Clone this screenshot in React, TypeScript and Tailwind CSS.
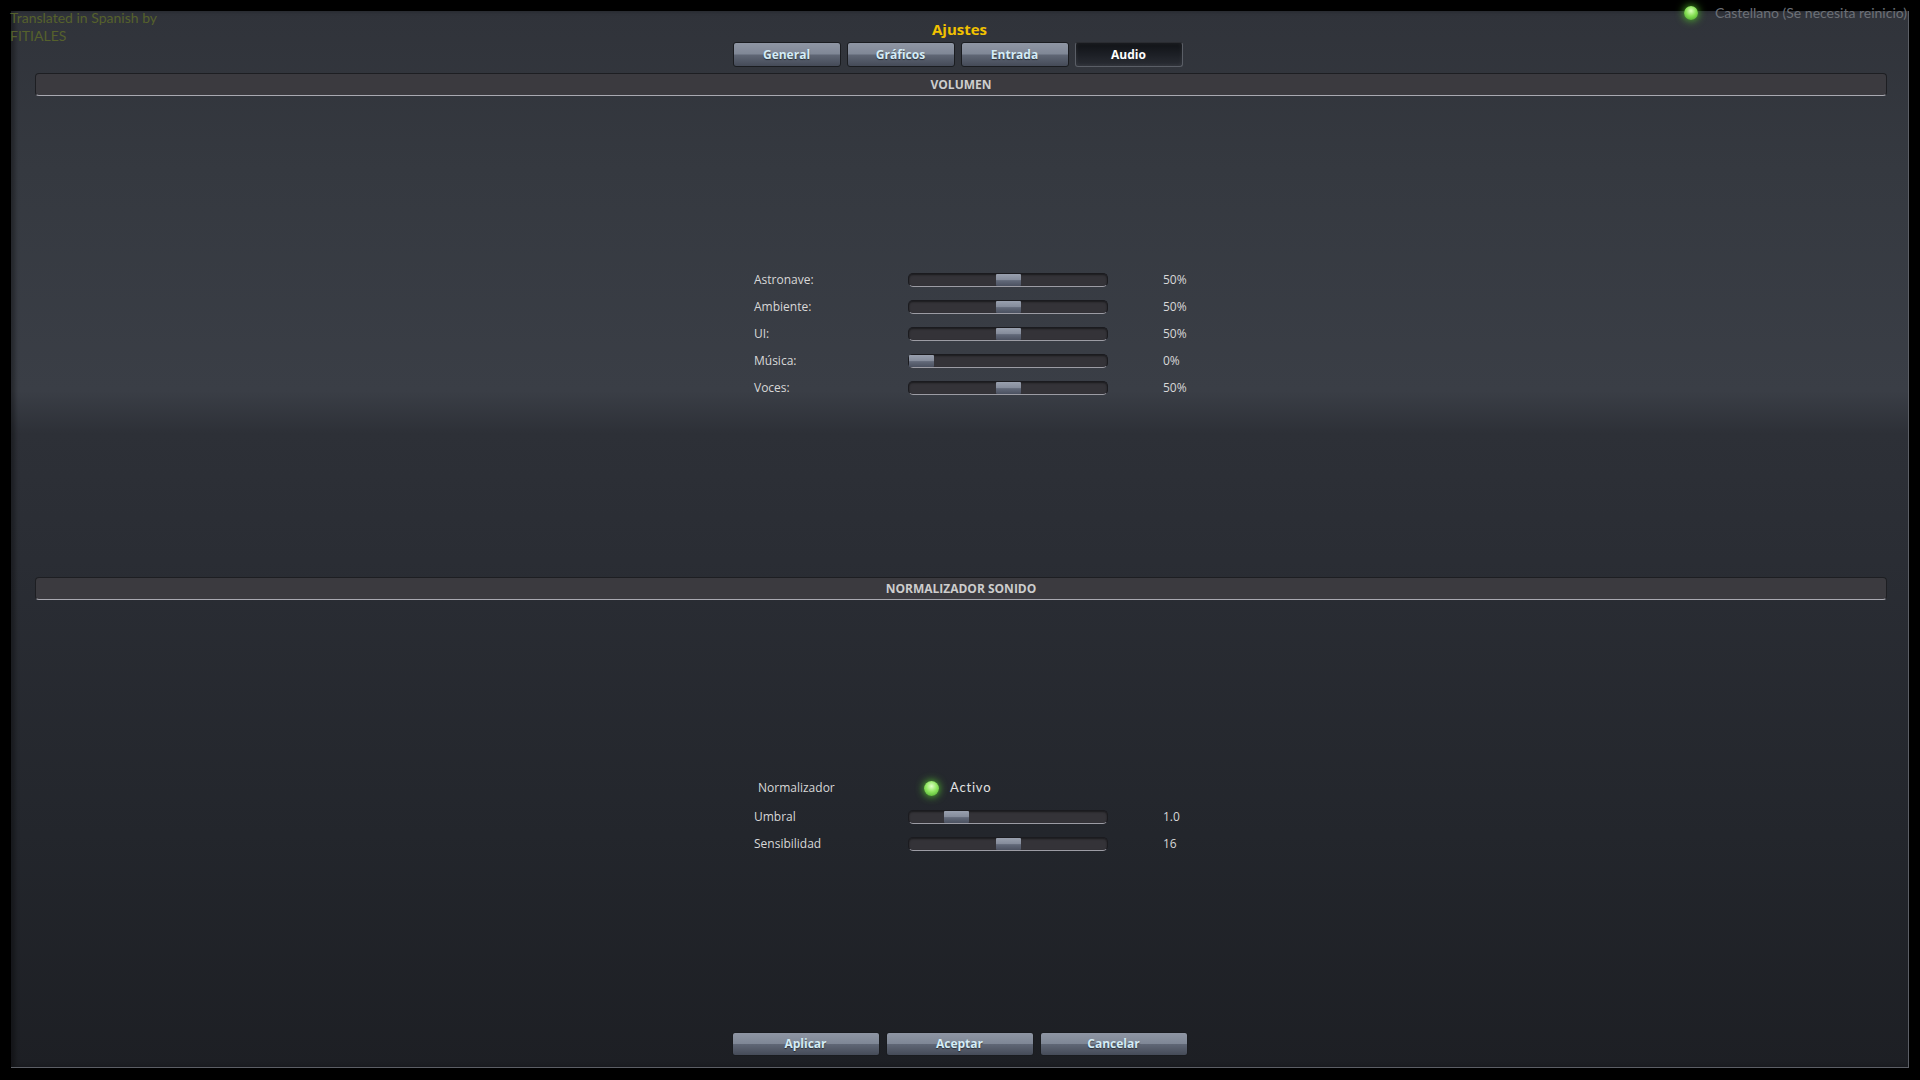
import React from 'react';

type SliderRow = { label: string; pct: number; value: string };

const volumeRows: SliderRow[] = [
  { label: 'Astronave:', pct: 0.5, value: '50%' },
  { label: 'Ambiente:', pct: 0.5, value: '50%' },
  { label: 'UI:', pct: 0.5, value: '50%' },
  { label: 'Música:', pct: 0, value: '0%' },
  { label: 'Voces:', pct: 0.5, value: '50%' },
];

const normRows: SliderRow[] = [
  { label: 'Umbral', pct: 0.2, value: '1.0' },
  { label: 'Sensibilidad', pct: 0.5, value: '16' },
];

const tabs = ['General', 'Gráficos', 'Entrada', 'Audio'];

function Slider({ pct }: { pct: number }) {
  return (
    <div className="relative h-[14px] w-[200px] rounded-[5px] border border-[#1b1b1f] border-b-[#9c9ca4] bg-[#343338] shadow-[inset_0_1px_2px_rgba(0,0,0,0.5)]">
      <div
        className="absolute top-0 h-full w-[25px] rounded-[1px] bg-[linear-gradient(to_bottom,#99a0ae_0%,#858c9b_48%,#626979_55%,#4b5160_100%)]"
        style={{ left: `${pct * 173}px` }}
      />
    </div>
  );
}

function Row({ row }: { row: SliderRow }) {
  return (
    <div className="flex h-[27px] items-center pl-[743px] font-['Open_Sans',sans-serif]">
      <div className="w-[154px] text-[12px] text-[#d8d8d8]">{row.label}</div>
      <Slider pct={row.pct} />
      <div className="ml-[55px] text-[12px] text-[#d8d8d8]">{row.value}</div>
    </div>
  );
}

function SectionHeader({ title }: { title: string }) {
  return (
    <div className="ml-[24px] mr-[21px] flex h-[23px] items-center justify-center rounded-[4px] border border-[#1d1e22] border-b-[#a9a9b1] bg-[#3b3a3f] font-['Open_Sans',sans-serif] text-[12px] font-bold text-[#cdcdcd]">
      {title}
    </div>
  );
}

function GameButton({ label, active = false, wide = false }: { label: string; active?: boolean; wide?: boolean }) {
  const size = wide ? 'w-[148px] h-[24px]' : 'w-[108px] h-[25px]';
  if (active) {
    return (
      <div
        className={`${size} flex items-center justify-center rounded-[3px] border border-[#5a5e66] border-t-[#2a2c31] bg-[linear-gradient(to_bottom,#101216_0%,#1c1f25_50%,#2a2d34_100%)] font-['Open_Sans',sans-serif] text-[12px] font-bold text-white shadow-[inset_0_0_4px_rgba(255,255,255,0.08)]`}
      >
        {label}
      </div>
    );
  }
  return (
    <div
      className={`${size} flex items-center justify-center rounded-[3px] border border-[#1a1c20] bg-[linear-gradient(to_bottom,#8f96a4_0%,#7f8796_48%,#5f6675_52%,#454b58_100%)] font-['Open_Sans',sans-serif] text-[12px] font-bold text-[#d4ecf6] [text-shadow:0_1px_1px_rgba(0,0,0,0.5)]`}
    >
      {label}
    </div>
  );
}

export default function App() {
  return (
    <div className="h-screen w-screen bg-black pt-[11px] pr-[11px] pb-[12px] pl-[11px] font-['Lato','Open_Sans',sans-serif]">
      <div className="relative flex h-full flex-col border-r border-b border-[#5c5f66] bg-[linear-gradient(to_bottom,#30333a_0%,#353940_15%,#3a3e46_36%,#2d3037_40%,#2a2d34_52%,#23262c_78%,#1d1f24_100%)] shadow-[inset_4px_0_4px_rgba(0,0,0,0.35)]">
        {/* credits */}
        <div className="absolute left-[-1px] top-[-2px] text-[14px] leading-[18px] text-[#56612c]">
          <div>Translated in Spanish by</div>
          <div>FITIALES</div>
        </div>

        {/* language */}
        <div className="absolute right-[1px] top-[-9px] flex items-center">
          <div className="h-[14px] w-[14px] rounded-full bg-[radial-gradient(circle_at_50%_35%,#d8ffb8_0%,#86e055_45%,#3f9a22_100%)] shadow-[0_0_8px_#56d12a]" />
          <div className="ml-[17px] text-[14px] text-[#6c7077]">Castellano (Se necesita reinicio)</div>
        </div>

        <div className="pt-[8px] text-center font-['Open_Sans',sans-serif] text-[15px] font-bold leading-[20px] text-[#f2c200]">Ajustes</div>

        <div className="mt-[3px] flex justify-center gap-[6px] pr-[4px]">
          {tabs.map((t) => (
            <GameButton key={t} label={t} active={t === 'Audio'} />
          ))}
        </div>

        <div className="mt-[6px]">
          <SectionHeader title="VOLUMEN" />
        </div>

        <div className="mt-[170px]">
          {volumeRows.map((r) => (
            <Row key={r.label} row={r} />
          ))}
        </div>

        <div className="mt-[176px]">
          <SectionHeader title="NORMALIZADOR SONIDO" />
        </div>

        <div className="mt-[173px]">
          <div className="flex h-[30px] items-center pl-[743px]">
            <div className="w-[154px] pl-[4px] font-['Open_Sans',sans-serif] text-[12px] text-[#d8d8d8]">Normalizador</div>
            <div className="ml-[16px] h-[15px] w-[15px] rounded-full bg-[radial-gradient(circle_at_50%_35%,#e0ffc8_0%,#8fe660_45%,#44a526_100%)] shadow-[0_0_9px_#5bd92e]" />
            <div className="ml-[11px] text-[13px] tracking-[0.8px] text-[#e2e2e2]">Activo</div>
          </div>
          {normRows.map((r) => (
            <Row key={r.label} row={r} />
          ))}
        </div>

        <div className="mt-auto flex justify-center gap-[6px] pb-[11px]">
          <GameButton label="Aplicar" wide />
          <GameButton label="Aceptar" wide />
          <GameButton label="Cancelar" wide />
        </div>
      </div>
    </div>
  );
}
